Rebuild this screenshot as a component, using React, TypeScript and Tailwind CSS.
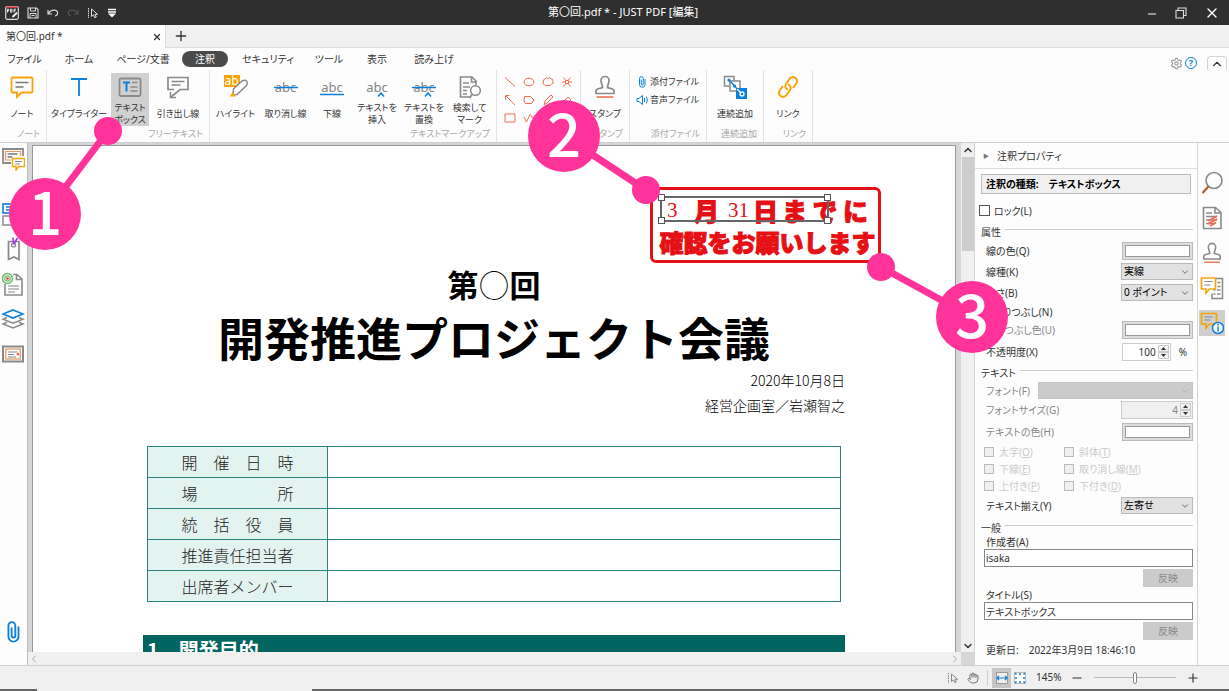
import React, { useState } from 'react';
import { ChevronDown, ChevronLeft, ChevronRight, ChevronUp, Hand, Minus, Plus, Settings, X } from 'lucide-react';

interface IconProps {
  className?: string;
}

const GRAY = '#8a8a8a';
const BLUE = '#0a80dc';
const ORANGE = '#f7a30a';
const RED = '#f26a50';

/* ---------- Icons ---------- */

const Svg: React.FC<{ box?: number; className?: string; children: React.ReactNode }> = ({ box = 24, className = 'size-6', children }) => (
  <svg viewBox={`0 0 ${box} ${box}`} fill="none" strokeWidth="1.5" className={`shrink-0 ${className}`}>
    {children}
  </svg>
);

const AppIcon = () => (
  <Svg box={14} className="size-3.5">
    <rect x="0.7" y="0.7" width="12.6" height="12.6" rx="1.5" stroke="#ddd" strokeWidth="1.2" />
    <path d="M1.5 1.2h11" stroke="#c33" strokeWidth="1.6" />
    <path d="M2.5 6.5V3.2h1.2v1.6H2.5M5.6 3.2v3h1.3V3.2zM9 6.5V3.2h2M9 4.8h1.6" stroke="#fff" strokeWidth="0.9" />
    <path d="M7 11.5l.6-2L11.500 6l1.200 1.200L9 11z" fill="#fff" />
  </Svg>
);

const SaveIcon = () => (
  <Svg box={12} className="size-3">
    <path d="M1 1h8.500L11 2.500V11H1z" stroke="#ddd" strokeWidth="1.1" />
    <path d="M3.500 1v3h5V1M3 11V6.500h6V11M4.500 8.500h3" stroke="#ddd" strokeWidth="1" />
  </Svg>
);

const UndoIcon = ({ className = '' }: IconProps) => (
  <Svg box={12} className={`size-3 ${className}`}>
    <path d="M1 3v4h4M1.200 6.800C3 4 5 3 7.500 3.200 10 3.500 11 5 10.500 7c-.3 1-1.300 1.800-2.500 2" stroke="currentColor" strokeWidth="1.2" />
  </Svg>
);

const PointerIcon = ({ className = '' }: IconProps) => (
  <Svg box={12} className={`size-3 ${className}`}>
    <path d="M1.500 1v10" stroke="currentColor" strokeWidth="1" strokeDasharray="1.500 0.800" />
    <path d="M4.500 2v7.500l2-1.700 1.300 2.900 1.500-.7-1.300-2.700H10.500z" stroke="currentColor" strokeWidth="1" />
  </Svg>
);

const MenuDropIcon = () => (
  <Svg box={10} className="size-2.5">
    <path d="M1 1.500h8M1 4h8" stroke="#fff" strokeWidth="1.500" />
    <path d="M1 5.500h8L5 9.500z" fill="#fff" />
  </Svg>
);

const NoteIcon = () => (
  <Svg>
    <path d="M2.500 2.500h19a1 1 0 011 1v13a1 1 0 01-1 1H11.500L7 22v-4.500H2.500a1 1 0 01-1-1v-13a1 1 0 011-1z" stroke={ORANGE} strokeWidth="1.800" />
    <path d="M5.500 7.500h13M5.500 12h8" stroke="#777" strokeWidth="1.500" />
  </Svg>
);

const TypewriterIcon = () => (
  <Svg>
    <path d="M4 4h16M12 4v17" stroke={BLUE} strokeWidth="1.800" />
  </Svg>
);

const TextBoxIcon = () => (
  <Svg>
    <rect x="1.500" y="3.500" width="21" height="17.500" rx="1.500" stroke={GRAY} strokeWidth="1.800" />
    <path d="M5 7.500h7M8.500 7.500v9" stroke={BLUE} strokeWidth="2" />
    <path d="M14 7.500h5.500M12.500 12h7M12.500 16h7" stroke={GRAY} />
  </Svg>
);

const CalloutIcon = () => (
  <Svg>
    <path d="M8 14.500H2v-12h20v12h-8L5 22" stroke={GRAY} strokeWidth="1.700" />
    <path d="M4.500 17v5.500h5.500M5.500 6.500h13M5.500 10h9" stroke={GRAY} />
  </Svg>
);

const HighlightIcon = () => (
  <span className="relative flex h-6 w-6 items-start">
    <span className="bg-[#f7a30a] px-px text-[12px] leading-3 text-white">ab</span>
    <svg viewBox="0 0 24 24" fill="none" className="absolute inset-0 size-6">
      <path d="M9.500 14L18 6q3-1.500 4.500 0t0 4.500L13 19.500l-4 .5z" fill="#fff" stroke={GRAY} strokeWidth="1.500" />
      <path d="M8.500 17l3.500 4.500H6z" fill={ORANGE} />
    </svg>
  </span>
);

const AbcIcon: React.FC<{ strike?: boolean; underline?: boolean; caret?: boolean }> = ({ strike, underline, caret }) => (
  <span className="relative flex h-6 w-6 items-center justify-center text-[13px] leading-4 text-[#858585]">
    abc
    <svg viewBox="0 0 24 24" fill="none" className="absolute inset-0 size-6" stroke={BLUE} strokeWidth="1.500">
      {strike && <path d="M0 12.500h24" />}
      {underline && <path d="M0 19.500h24" />}
      {caret && <path d="M13 21.500l3-3.500 3 3.500" />}
    </svg>
  </span>
);

const SearchMarkIcon = () => (
  <Svg>
    <path d="M12 22H2.500V2H14l4 4v4M13.500 2v5H18" stroke={GRAY} strokeWidth="1.600" />
    <path d="M5 8h6M5 12h7M5 15.500h4M5 19h4" stroke={GRAY} />
    <circle cx="17.500" cy="15.500" r="4.800" fill="#fff" stroke={GRAY} strokeWidth="1.500" />
    <path d="M14 19.500L11.500 23" stroke={GRAY} strokeWidth="1.800" />
  </Svg>
);

const StampIcon = ({ className = 'size-6' }: IconProps) => (
  <Svg className={className}>
    <path d="M9.500 12.500C9.500 9.500 8 8.500 8 5.500a4 4 0 018 0c0 3-1.500 4-1.500 7l5 1.500q1.500.5 1.500 2v2.500H3V16q0-1.500 1.500-2z" stroke={GRAY} strokeWidth="1.700" />
    <path d="M3.500 22h17" stroke={RED} strokeWidth="1.500" />
  </Svg>
);

const SequenceIcon = () => (
  <Svg>
    <path d="M6 11H1.500V1.500H11V6M7 6h10v10H7z" stroke={GRAY} strokeWidth="1.500" />
    <rect x="13" y="13" width="11" height="11" fill={BLUE} />
    <path d="M6 5l11 12" stroke={BLUE} strokeWidth="1.300" />
    <path d="M14 14l4 4" stroke="#fff" strokeWidth="1.200" />
    <circle cx="6" cy="5" r="1.600" fill={BLUE} />
    <circle cx="11.500" cy="11" r="1.600" fill={BLUE} />
    <circle cx="19" cy="19" r="2" stroke="#fff" strokeWidth="1.300" />
  </Svg>
);

const LinkIcon = () => (
  <Svg>
    <path d="M12 14.500c-2.500-.5-3.500-3-2-5.500l3.500-5c1.500-2 4-2.500 6-1s2 4 .5 6L17 13" stroke={ORANGE} strokeWidth="2" />
    <path d="M12 9.500c2.500.5 3.500 3 2 5.500l-3.500 5c-1.500 2-4 2.500-6 1s-2-4-.5-6L7 11" stroke={ORANGE} strokeWidth="2" />
  </Svg>
);

const ClipIcon = ({ className = 'size-6' }: IconProps) => (
  <Svg className={className}>
    <path d="M18 6v11a5.500 5.500 0 01-11 0V5a3.700 3.700 0 017.500 0v11a2 2 0 01-4 0V7" stroke={BLUE} strokeWidth="2" />
  </Svg>
);

const SpeakerIcon = () => (
  <Svg box={12} className="size-3">
    <path d="M1 4.500h2L6.500 1.500v9L3 7.500H1z" stroke={BLUE} strokeWidth="1" />
    <path d="M8.500 4v4M10.500 2.500q1.500 3.500 0 7" stroke={BLUE} strokeWidth="1" />
  </Svg>
);

const shapePaths: { name: string; d: string }[] = [
  { name: '直線', d: 'M1 1.500L11 10.500' },
  { name: '楕円', d: 'M1 6a5 3.800 0 0110 0a5 3.800 0 01-10 0z' },
  { name: '雲形', d: 'M3 3q1-2 3-.8 2-1.200 3 .5 2.500.3 2 2.500 1 2.500-1.500 3-1 2-3.500 1.300-2.500 1-3.500-.8Q.5 8.500 1.200 6 .5 3.500 3 3z' },
  { name: '接続線', d: 'M1 6h3M8 6h3M2.500 1.500L5 4.500M9.500 1.500L7 4.500M2.500 10.500L5 7.500M7 7.500l2.500 3M4.500 4.500h3v3h-3z' },
  { name: '矢印', d: 'M11 11L2 2M1.500 5.500v-4h4' },
  { name: '多角形', d: 'M1.500 2.500h6L11 6 8.500 9.500h-6L1 7z' },
  { name: '鉛筆', d: 'M2 10.500L3 7l6-6 2 2-6 6z' },
  { name: '消しゴム', d: 'M2 8l5-5 3 3-5 5z' },
  { name: '四角形', d: 'M1 2h10v8H1z' },
  { name: '折れ線', d: 'M1 5l2.500 5L7 2.500l4 5' },
  { name: 'フリーハンド', d: 'M1 8q2-6 5-2t5-2' },
];

/* Navigation icons */

const CommentListIcon = () => (
  <Svg>
    <path d="M10 16H2V2h20v7" stroke={GRAY} strokeWidth="1.800" />
    <path d="M10 13H4.500V4.500h15V9" stroke="#dd9a62" strokeWidth="1.200" />
    <path d="M6.500 7h10M6.500 10h5" stroke="#777" />
    <path d="M11.500 11.500h12v8H17.500L15 23v-3.500h-3.500z" fill="#fff" stroke={ORANGE} strokeWidth="1.400" />
    <path d="M14 14.500h7M14 17h5" stroke={GRAY} strokeWidth="1" />
  </Svg>
);

const PagesIcon = () => (
  <Svg>
    <rect x="2" y="2" width="20" height="9" stroke={BLUE} strokeWidth="1.600" />
    <path d="M5 5h12M5 8h8" stroke={BLUE} />
    <rect x="2" y="14" width="20" height="9" stroke={GRAY} />
  </Svg>
);

const BookmarkIcon = () => (
  <Svg>
    <path d="M7.500 4.500h10.500v18l-5-2.500-5.500 2.500z" stroke={GRAY} strokeWidth="1.700" />
    <circle cx="12.500" cy="8" r="2" stroke={GRAY} strokeWidth="1.200" />
    <path d="M12.500 7.500L12 .5M12.500 7.500L16.500 1" stroke="#a23be0" strokeWidth="1.600" />
  </Svg>
);

const TargetDocIcon = () => (
  <Svg>
    <path d="M4 12v11h17V7l-5-4.500h-4M15.500 3v4.500H20.500" stroke={GRAY} strokeWidth="1.600" />
    <path d="M7 14h11M7 17h11M7 20h7" stroke={GRAY} strokeWidth="1.200" />
    <circle cx="6.500" cy="6.500" r="5" fill="#fff" stroke="#6db86a" strokeWidth="1.500" />
    <circle cx="6.500" cy="6.500" r="2.700" stroke="#6db86a" strokeWidth="1.200" />
    <circle cx="6.500" cy="6.500" r="1.200" fill="#e33" />
  </Svg>
);

const LayersIcon = () => (
  <Svg>
    <path d="M6 10.500L2 12.300l10 4 10-4-4-1.800M6 15.200L2 17l10 4L22 17l-4-1.800" stroke={GRAY} strokeWidth="1.500" />
    <path d="M12 3l10 4-10 4L2 7z" stroke={BLUE} strokeWidth="1.700" />
  </Svg>
);

const FormIcon = () => (
  <Svg>
    <rect x="2" y="4.500" width="20" height="15" stroke={GRAY} strokeWidth="2" />
    <rect x="4.800" y="7" width="14.500" height="10" stroke="#dd9a62" strokeWidth="1.200" />
    <path d="M7 10h9M7 12.500h6M7 15h8" stroke={GRAY} strokeWidth="1.200" />
    <circle cx="17" cy="12" r="1.300" fill="#e55" />
  </Svg>
);

const FindIcon = () => (
  <Svg>
    <circle cx="14" cy="9.500" r="8" stroke={GRAY} strokeWidth="1.600" />
    <path d="M8.500 15.500L2.500 22" stroke="#a85a26" strokeWidth="2" />
  </Svg>
);

const CompareIcon = () => (
  <Svg>
    <path d="M3.500 1.500H15.500l5.500 5V22.500h-17.500zM15 2v5h5.500" stroke={GRAY} strokeWidth="1.600" />
    <path d="M6 7h6M6 10.500h11M6 14h11M6 17.500h9" stroke={GRAY} />
    <path d="M8 15l9-5M8 18l9-5M10 20l6-3.500" stroke={RED} strokeWidth="2" />
  </Svg>
);

const ReviewIcon = () => (
  <Svg>
    <path d="M13 2.500h9.500v20H12v-5" stroke={GRAY} strokeWidth="1.500" />
    <path d="M17.500 6.500h3M17.500 10.500h3M13.500 14h2M17 14h3.500M13.500 18h2M17 18h3.500" stroke={GRAY} />
    <path d="M1.500 2h14v11H9.500L6 17v-4H1.500z" fill="#fff" stroke={ORANGE} strokeWidth="1.700" />
    <path d="M4.500 5.500h8M4.500 9h6" stroke={GRAY} strokeWidth="1.200" />
  </Svg>
);

const NoteInfoIcon = () => (
  <Svg>
    <path d="M1.500 2.500h15V13H9.500L6 17v-4H1.500z" stroke={ORANGE} strokeWidth="1.700" />
    <path d="M4.500 6h8M4.500 9h6" stroke={GRAY} strokeWidth="1.200" />
    <circle cx="18" cy="17" r="5.500" fill="#fff" stroke={BLUE} strokeWidth="1.500" />
    <path d="M18 15.500v5M18 13v1.500" stroke={BLUE} strokeWidth="1.500" />
  </Svg>
);

/* ---------- Ribbon ---------- */

interface RibbonButtonProps {
  icon: React.ReactNode;
  label: string;
  width: string;
  active?: boolean;
}

const RibbonButton: React.FC<RibbonButtonProps> = ({ icon, label, width, active }) => (
  <button className={`flex h-[53px] shrink-0 flex-col items-center ${width} ${active ? 'bg-[#d0d0d0]' : ''}`}>
    <span className="flex h-7 items-center">{icon}</span>
    <span className="flex h-[25px] items-center whitespace-pre text-center text-[9px] leading-3">{label}</span>
  </button>
);

const RibbonGroup: React.FC<{ label: string; width: string; children: React.ReactNode }> = ({ label, width, children }) => (
  <div className={`flex shrink-0 flex-col justify-between border-r border-[#e4e4e4] ${width}`}>
    <div className="flex pt-[3px]">{children}</div>
    <div className="h-4 whitespace-nowrap pr-1.5 text-right text-[9px] leading-4 text-[#a8a8a8]">{label}</div>
  </div>
);

const menuTabs = [
  { label: 'ファイル', width: 'w-[49px]' },
  { label: 'ホーム', width: 'w-[60px]' },
  { label: 'ページ/文書', width: 'w-[68px]' },
  { label: '注釈', width: 'w-[46px] mx-[5px]' },
  { label: 'セキュリティ', width: 'w-[70px]' },
  { label: 'ツール', width: 'w-[52px]' },
  { label: '表示', width: 'w-[44px]' },
  { label: '読み上げ', width: 'w-[70px]' },
];

const Ribbon = () => {
  const [activeTab, setActiveTab] = useState('注釈');

  return (
    <div className="border-b border-[#cfcfcf] bg-[#fdfdfd] text-[10px] text-[#333]">
      <div className="flex h-[22px] items-center">
        {menuTabs.map((tab) => (
          <button
            key={tab.label}
            onClick={() => setActiveTab(tab.label)}
            className={`h-4 whitespace-nowrap rounded-full leading-4 ${tab.width} ${activeTab === tab.label ? 'bg-[#4a4a4a] text-white' : ''}`}
          >
            {tab.label}
          </button>
        ))}
        <div className="ml-auto flex h-full items-center gap-0.5">
          <button aria-label="設定" className="mt-2"><Settings className="size-[13px] text-[#999]" /></button>
          <button aria-label="ヘルプ" className="mt-2 flex size-3 items-center justify-center rounded-full border border-[#0a80dc] text-[9px] font-bold leading-3 text-[#0a80dc]">?</button>
          <button aria-label="リボンを閉じる" className="ml-2 mr-0.5 flex h-[14px] w-5 items-center justify-center self-end rounded-t-sm border border-b-0 border-[#d5d5d5]">
            <ChevronUp className="size-3.5" />
          </button>
        </div>
      </div>

      <div className="flex h-[72px]">
        <RibbonGroup label="ノート" width="w-[47px]">
          <RibbonButton icon={<NoteIcon />} label="ノート" width="w-[44px]" />
        </RibbonGroup>
        <RibbonGroup label="フリーテキスト" width="w-[163px]">
          <RibbonButton icon={<TypewriterIcon />} label="タイプライター" width="w-[64px]" />
          <RibbonButton icon={<TextBoxIcon />} label={'テキスト\nボックス'} width="w-[38px]" active />
          <RibbonButton icon={<CalloutIcon />} label="引き出し線" width="w-[58px]" />
        </RibbonGroup>
        <RibbonGroup label="テキストマークアップ" width="w-[287px]">
          <RibbonButton icon={<HighlightIcon />} label="ハイライト" width="w-[51px]" />
          <RibbonButton icon={<AbcIcon strike />} label="取り消し線" width="w-[49px]" />
          <RibbonButton icon={<AbcIcon underline />} label="下線" width="w-[44px]" />
          <RibbonButton icon={<AbcIcon caret />} label={'テキストを\n挿入'} width="w-[46px]" />
          <RibbonButton icon={<AbcIcon strike caret />} label={'テキストを\n置換'} width="w-[48px]" />
          <RibbonButton icon={<SearchMarkIcon />} label={'検索して\nマーク'} width="w-[43px]" />
        </RibbonGroup>
        <RibbonGroup label="" width="w-[84px]">
          <div className="grid grid-cols-4 gap-x-[7px] gap-y-1.5 pl-[7px] pt-[3px]">
            {shapePaths.map((shape) => (
              <button key={shape.name} aria-label={shape.name}>
                <svg viewBox="0 0 12 12" className="size-3" fill="none" stroke={RED}><path d={shape.d} /></svg>
              </button>
            ))}
          </div>
        </RibbonGroup>
        <RibbonGroup label="スタンプ" width="w-[49px]">
          <RibbonButton icon={<StampIcon />} label="スタンプ" width="w-[48px]" />
        </RibbonGroup>
        <RibbonGroup label="添付ファイル" width="w-[77px]">
          <div className="flex flex-col pl-1.5 text-[9px]">
            <button className="flex h-[18px] items-center gap-0.5 whitespace-nowrap"><ClipIcon className="size-3" />添付ファイル</button>
            <button className="flex h-[18px] items-center gap-0.5 whitespace-nowrap"><SpeakerIcon />音声ファイル</button>
          </div>
        </RibbonGroup>
        <RibbonGroup label="連続追加" width="w-[57px]">
          <RibbonButton icon={<SequenceIcon />} label="連続追加" width="w-[56px]" />
        </RibbonGroup>
        <RibbonGroup label="リンク" width="w-[49px]">
          <RibbonButton icon={<LinkIcon />} label="リンク" width="w-[48px]" />
        </RibbonGroup>
      </div>
    </div>
  );
};

/* ---------- Document ---------- */

const agendaRows = ['開　催　日　時', '場　　　　　所', '統　括　役　員', '推進責任担当者', '出席者メンバー'];

// A stamp and its text box float freely on the page
const DeadlineStamp = () => (
  <div className="absolute right-[74px] top-[41px] h-[76px] w-[231px] rounded-md border-[3px] border-[#e60f14] text-[#e60f14]">
    <div className="flex h-9 items-center pl-3.5 pt-1 text-[25px] font-black leading-9">
      <span className="w-[27px] font-['Liberation_Serif'] text-[21px] font-normal">3</span>
      <span className="w-[34px] [-webkit-text-stroke:1px]">月</span>
      <span className="w-[25px] font-['Liberation_Serif'] text-[21px] font-normal">31</span>
      <span className="[-webkit-text-stroke:1px]">日</span>
      <span className="flex flex-1 justify-between pl-1 pr-2.5 [-webkit-text-stroke:1px]"><span>ま</span><span>で</span><span>に</span></span>
    </div>
    <div className="flex h-8 items-center justify-center whitespace-nowrap pl-1 text-[24px] font-black leading-8 [-webkit-text-stroke:1px] [font-feature-settings:normal]">確認をお願いします</div>
    <div className="absolute left-[7px] top-[6px] h-[26px] w-[169px] border-2 border-[#666]">
      <i className="absolute -left-[4px] -top-[4px] size-[7px] border border-[#555] bg-white" />
      <i className="absolute -right-[4px] -top-[4px] size-[7px] border border-[#555] bg-white" />
      <i className="absolute -bottom-[4px] -left-[4px] size-[7px] border border-[#555] bg-white" />
      <i className="absolute -bottom-[4px] -right-[4px] size-[7px] border border-[#555] bg-white" />
    </div>
  </div>
);

const DocumentPage = () => (
  <div className="relative min-w-0 flex-1 overflow-hidden border border-b-0 border-[#999] bg-white px-[110px] font-['Noto_Sans_CJK_JP',sans-serif] text-black [font-feature-settings:normal]">
    <DeadlineStamp />
    <h2 className="mt-[116px] text-center text-[31px] font-bold leading-[44px]">
      第<span className="font-thin">〇</span>回
    </h2>
    <h1 className="whitespace-nowrap text-center text-[46px] font-bold leading-[60px]">開発推進プロジェクト会議</h1>
    <p className="mt-[2px] text-right text-[14px] font-light leading-[25px]">2020年10月8日</p>
    <p className="text-right text-[14px] font-light leading-[25px]">経営企画室／岩瀬智之</p>
    <div className="px-1 pt-[28px]">
      <table className="w-full border-collapse">
        <tbody>
          {agendaRows.map((row) => (
            <tr key={row} className="h-[31px]">
              <th className="w-[180px] whitespace-nowrap border border-[#2f8280] bg-[#e3f3f0] p-0 text-center text-[16px] font-light leading-[30px] text-[#222]">{row}</th>
              <td className="border border-[#2f8280]" />
            </tr>
          ))}
        </tbody>
      </table>
    </div>
    <h3 className="mt-[33px] h-[30px] whitespace-pre bg-[#006460] pl-1 text-[20px] font-bold leading-[30px] text-white">1　開発目的</h3>
  </div>
);

/* ---------- Properties panel ---------- */

const PropRow: React.FC<{ id?: string; label: string; height: string; dim?: boolean; children?: React.ReactNode }> = ({ id, label, height, dim, children }) => (
  <div className={`flex items-center justify-between pl-[11px] pr-1 ${height} ${dim ? 'text-[#888]' : ''}`}>
    <label htmlFor={id}>{label}</label>
    {children}
  </div>
);

const SectionTitle = ({ children }: { children: React.ReactNode }) => (
  <div className="flex h-[17px] items-center gap-1 pl-1.5 pr-1">
    <span>{children}</span>
    <span className="mb-1 h-px flex-1 bg-[#ccc]" />
  </div>
);

const ColorButton = ({ id }: { id: string }) => (
  <button id={id} className="h-[18px] w-[71px] border border-[#bbb] bg-[#ddd] p-0.5">
    <span className="block h-full border border-[#999] bg-white" />
  </button>
);

const Dropdown: React.FC<{ id: string; value: string; width?: string; disabled?: boolean }> = ({ id, value, width = 'w-[72px]', disabled }) => (
  <div className={`relative ${width}`}>
    <select id={id} disabled={disabled} className={`block h-[17px] w-full appearance-none border pl-0.5 leading-[15px] ${disabled ? 'border-[#c4c4c4] bg-[#cbcbcb]' : 'border-[#bbb] bg-[#e1e1e1] text-black'}`}>
      <option>{value}</option>
    </select>
    <ChevronDown className={`pointer-events-none absolute right-[3px] top-1 size-2.5 ${disabled ? 'text-[#aaa]' : 'text-[#555]'}`} />
  </div>
);

const Spinner: React.FC<{ id: string; value: string; width: string; disabled?: boolean }> = ({ id, value, width, disabled }) => (
  <div className={`flex h-[18px] items-center border border-[#ccc] p-px ${width} ${disabled ? 'bg-[#f0f0f0]' : 'bg-white'}`}>
    <input id={id} defaultValue={value} disabled={disabled} className="w-0 min-w-0 flex-1 pr-0.5 text-right" />
    <span className="flex w-[11px] flex-col">
      <button aria-label="増やす" className="flex h-[7px] items-center justify-center border border-[#ccc] bg-[#f0f0f0]">
        <svg viewBox="0 0 5 3" className="h-[3px] w-[5px]" fill="#333"><path d="M0 3h5L2.500 0z" /></svg>
      </button>
      <button aria-label="減らす" className="flex h-[7px] items-center justify-center border border-[#ccc] bg-[#f0f0f0]">
        <svg viewBox="0 0 5 3" className="h-[3px] w-[5px]" fill="#333"><path d="M0 0h5L2.500 3z" /></svg>
      </button>
    </span>
  </div>
);

const textStyles = [
  { name: '太字', mnemonic: 'O' },
  { name: '斜体', mnemonic: 'T' },
  { name: '下線', mnemonic: 'E' },
  { name: '取り消し線', mnemonic: 'M' },
  { name: '上付き', mnemonic: 'P' },
  { name: '下付き', mnemonic: 'D' },
];

const PropertiesPanel = () => (
  <aside className="w-[224px] shrink-0 overflow-hidden whitespace-nowrap border-x border-[#d4d4d4] bg-[#fdfdfd] text-[10px] leading-4 text-[#333]">
    <div className="flex h-[26px] items-center gap-2 border-b border-[#ddd] pl-2">
      <span className="text-[6px] text-[#777]">▶</span>注釈プロパティ
    </div>
    <div className="mx-1.5 mt-[5px] h-5 border border-[#bbb] bg-[#f0f0f0] px-1 leading-[18px] font-bold text-black">注釈の種類:　テキストボックス</div>
    <label className="mt-2 flex h-[17px] items-center gap-1 pl-1">
      <input type="checkbox" className="size-[11px] appearance-none border border-[#555] bg-white" />ロック(L)
    </label>
    <div className="h-1" />
    <SectionTitle>属性</SectionTitle>
    <PropRow id="lineColor" label="線の色(Q)" height="h-[21px]"><ColorButton id="lineColor" /></PropRow>
    <PropRow id="lineType" label="線種(K)" height="h-[21px]"><Dropdown id="lineType" value="実線" /></PropRow>
    <PropRow id="lineWidth" label="太さ(B)" height="h-[21px]"><Dropdown id="lineWidth" value="0 ポイント" /></PropRow>
    <label className="flex h-[17px] items-center gap-1 pl-1">
      <input type="checkbox" className="size-[10px] appearance-none border border-[#555] bg-white" />塗りつぶし(N)
    </label>
    <PropRow id="fillColor" label="塗りつぶし色(U)" height="h-[19px]" dim><ColorButton id="fillColor" /></PropRow>
    <PropRow id="opacity" label="不透明度(X)" height="h-[25px]">
      <div className="flex items-center gap-2 pr-1.5"><Spinner id="opacity" value="100" width="w-[49px]" />%</div>
    </PropRow>
    <SectionTitle>テキスト</SectionTitle>
    <PropRow id="font" label="フォント(F)" height="h-[19px]" dim><Dropdown id="font" value="" width="w-[155px]" disabled /></PropRow>
    <PropRow id="fontSize" label="フォントサイズ(G)" height="h-[20px]" dim><Spinner id="fontSize" value="4" width="w-[72px]" disabled /></PropRow>
    <PropRow id="textColor" label="テキストの色(H)" height="h-[23px]" dim><ColorButton id="textColor" /></PropRow>
    <div className="grid grid-cols-[80px_1fr] pl-[9px] text-[#ccc]">
      {textStyles.map((style) => (
        <label key={style.name} className="flex h-[17px] items-center gap-[5px]">
          <input type="checkbox" disabled className="size-[10px] appearance-none border border-[#bbb] bg-[#f0f0f0]" />
          <span>{style.name}(<u>{style.mnemonic}</u>)</span>
        </label>
      ))}
    </div>
    <PropRow id="align" label="テキスト揃え(Y)" height="h-[23px]"><Dropdown id="align" value="左寄せ" /></PropRow>
    <div className="h-0.5" />
    <SectionTitle>一般</SectionTitle>
    <div className="flex flex-col pl-[9px] pr-1">
      <label htmlFor="author" className="h-[13px] pl-0.5 leading-[13px]">作成者(A)</label>
      <input id="author" defaultValue="isaka" className="h-[18px] border border-[#888] bg-white px-px" />
      <button disabled className="mt-0.5 h-[18px] w-[50px] self-end bg-[#cbcbcb] text-[#888]">反映</button>
      <label htmlFor="title" className="mt-0.5 h-[13px] pl-0.5 leading-[13px]">タイトル(S)</label>
      <input id="title" defaultValue="テキストボックス" className="h-[18px] border border-[#888] bg-white px-px" />
      <button disabled className="mt-0.5 h-[18px] w-[50px] self-end bg-[#cbcbcb] text-[#888]">反映</button>
      <p className="mt-0.5 pl-0.5">更新日:　2022年3月9日 18:46:10</p>
    </div>
  </aside>
);

/* ---------- Callouts ---------- */

const callouts = [
  { n: 1, x: 45, y: 214, dotX: 108, dotY: 131 },
  { n: 2, x: 564, y: 136, dotX: 646, dotY: 190 },
  { n: 3, x: 972, y: 317, dotX: 881, dotY: 267 },
];

const Callouts = () => (
  <svg className="pointer-events-none absolute inset-0 h-full w-full" fill="#ff3399">
    {callouts.map((c) => (
      <g key={c.n}>
        <line x1={c.x} y1={c.y} x2={c.dotX} y2={c.dotY} stroke="#ff3399" strokeWidth="7" />
        <circle cx={c.dotX} cy={c.dotY} r="14" />
        <circle cx={c.x} cy={c.y} r="36" />
        <text x={c.x} y={c.y + 21} textAnchor="middle" fill="#fff" className="font-['Noto_Sans_CJK_JP',sans-serif] text-[60px] font-medium">{c.n}</text>
      </g>
    ))}
  </svg>
);

export default function App() {
  const [zoom, setZoom] = useState(50);

  return (
    <div className="relative flex h-screen flex-col overflow-hidden bg-[#f0f0f0] font-['Noto_Sans','Noto_Sans_CJK_JP',sans-serif] text-[#333] [font-feature-settings:'palt']">
      {/* Title bar */}
      <header className="flex h-[25px] shrink-0 items-center bg-[#2f2f2f] text-[11px] text-white">
        <div className="flex w-[128px] items-center gap-2 pl-[5px]">
          <AppIcon />
          <button aria-label="保存"><SaveIcon /></button>
          <button aria-label="元に戻す"><UndoIcon className="text-[#ddd]" /></button>
          <button aria-label="やり直し"><UndoIcon className="-scale-x-100 text-[#555]" /></button>
          <button aria-label="選択"><PointerIcon className="text-[#ddd]" /></button>
          <button aria-label="カスタマイズ"><MenuDropIcon /></button>
        </div>
        <div className="flex-1 whitespace-nowrap text-center">第〇回.pdf * - JUST PDF [編集]</div>
        <div className="flex w-[111px] items-center justify-end gap-[17px] pr-[9px]">
          <button aria-label="最小化" className="mt-[3px]"><Minus className="size-3" strokeWidth={2} /></button>
          <button aria-label="元のサイズに戻す">
            <Svg box={12} className="size-3">
              <path d="M1 3.500h7.500V11H1zM3 3.500V1h8v7.500H8.500" stroke="#ddd" strokeWidth="1.100" />
            </Svg>
          </button>
          <button aria-label="閉じる"><X className="size-4" strokeWidth={2} /></button>
        </div>
      </header>

      {/* File tabs */}
      <div className="flex h-[23px] shrink-0 border-b border-[#ddd]">
        <div className="-mb-px flex w-[166px] items-center justify-between border-r border-[#ddd] bg-[#fdfdfd] pl-1.5 pr-[3px] text-[10px]">
          第〇回.pdf *
          <button aria-label="タブを閉じる"><X className="size-2.5" strokeWidth={3} /></button>
        </div>
        <button aria-label="新しいタブ" className="px-[7px]"><Plus className="size-4" strokeWidth={2} /></button>
      </div>

      <Ribbon />

      <div className="flex min-h-0 flex-1">
        {/* Navigation icons */}
        <nav className="flex w-[28px] shrink-0 flex-col items-center gap-[11px] border-r border-[#bbb] bg-[#fdfdfd] pr-[2px] pt-1">
          <button aria-label="注釈一覧" className="mb-5"><CommentListIcon /></button>
          <button aria-label="ページ"><PagesIcon /></button>
          <button aria-label="しおり"><BookmarkIcon /></button>
          <button aria-label="リンク先"><TargetDocIcon /></button>
          <button aria-label="レイヤー"><LayersIcon /></button>
          <button aria-label="フォーム"><FormIcon /></button>
          <button aria-label="添付" className="mb-[22px] mt-auto"><ClipIcon className="size-[22px]" /></button>
        </nav>

        <main className="flex min-w-0 flex-1 flex-col bg-[#d6d6d6]">
          <div className="flex min-h-0 flex-1">
            <div className="flex min-w-0 flex-1 pl-1 pr-[5px] pt-0.5"><DocumentPage /></div>
            <div className="flex w-[13px] shrink-0 flex-col items-center justify-between bg-[#f0f0f0]">
              <div className="flex w-full flex-col items-center">
                <ChevronUp className="my-px size-3" strokeWidth={3} />
                <div className="h-[94px] w-[12px] bg-[#cdcdcd]" />
              </div>
              <ChevronDown className="size-3" strokeWidth={3} />
            </div>
          </div>
          <div className="flex h-[13px] shrink-0 items-center bg-[#f0f0f0]">
            <ChevronLeft className="size-3 text-[#aaa]" />
            <ChevronRight className="ml-auto size-3 text-[#aaa]" />
            <div className="h-full w-[13px] bg-[#d6d6d6]" />
          </div>
        </main>

        <PropertiesPanel />

        {/* Side tools */}
        <nav className="flex w-[31px] shrink-0 flex-col items-center gap-[9px] bg-[#fdfdfd] pr-[3px] pt-[27px]">
          <button aria-label="検索" className="flex size-[26px] items-center justify-center"><FindIcon /></button>
          <button aria-label="比較" className="flex size-[26px] items-center justify-center"><CompareIcon /></button>
          <button aria-label="スタンプ" className="flex size-[26px] items-center justify-center"><StampIcon className="size-[22px]" /></button>
          <button aria-label="レビュー" className="flex size-[26px] items-center justify-center"><ReviewIcon /></button>
          <button aria-label="注釈プロパティ" className="flex size-[26px] items-center justify-center bg-[#cfcfcf]"><NoteInfoIcon /></button>
        </nav>
      </div>

      {/* Status bar */}
      <footer className="flex h-[24px] shrink-0 items-center justify-end border-t border-[#d0d0d0] pr-[29px] text-[10px]">
        <button aria-label="選択ツール"><PointerIcon className="text-[#888]" /></button>
        <button aria-label="手のひらツール" className="ml-2"><Hand className="size-3 text-[#777]" /></button>
        <span className="ml-2 mr-1 h-4 w-px bg-[#ccc]" />
        <button aria-label="幅に合わせる" className="flex h-5 w-[19px] items-center justify-center bg-[#c6c6c6]">
          <Svg box={12} className="size-3">
            <path d="M.5.500h11v11H.5z" fill="#eee" stroke="#888" strokeWidth="0.800" />
            <path d="M1 6h10M3 4L1 6l2 2M9 4l2 2-2 2" stroke={BLUE} strokeWidth="1.200" />
          </Svg>
        </button>
        <button aria-label="全体を表示" className="ml-[3px]">
          <Svg box={12} className="size-3">
            <path d="M.5.500h11v11H.5z" fill="#fff" stroke="#aaa" strokeWidth="0.800" />
            <path d="M6 1v2M6 9v2M1 6h2M9 6h2M1 1l1.500 1.500M11 1L9.500 2.500M1 11l1.500-1.500M11 11L9.500 9.500" stroke={BLUE} strokeWidth="1.500" />
          </Svg>
        </button>
        <span className="ml-2.5 w-6">145%</span>
        <button aria-label="縮小" className="ml-2.5"><Minus className="size-3.5" strokeWidth={2} /></button>
        <input
          type="range"
          aria-label="ズーム"
          value={zoom}
          onChange={(e) => setZoom(Number(e.target.value))}
          className="mx-2.5 h-4 w-[82px] appearance-none bg-[linear-gradient(#bbb,#bbb)] bg-[length:100%_1px] bg-center bg-no-repeat [&::-webkit-slider-thumb]:h-3 [&::-webkit-slider-thumb]:w-1 [&::-webkit-slider-thumb]:appearance-none [&::-webkit-slider-thumb]:rounded-sm [&::-webkit-slider-thumb]:border [&::-webkit-slider-thumb]:border-[#888] [&::-webkit-slider-thumb]:bg-white"
        />
        <button aria-label="拡大"><Plus className="size-3.5" strokeWidth={2} /></button>
      </footer>
      <div className="flex h-[2px] shrink-0 bg-[#666]">
        <div className="ml-[37px] w-[275px] bg-[#f0f0f0]" />
      </div>

      <Callouts />
    </div>
  );
}
